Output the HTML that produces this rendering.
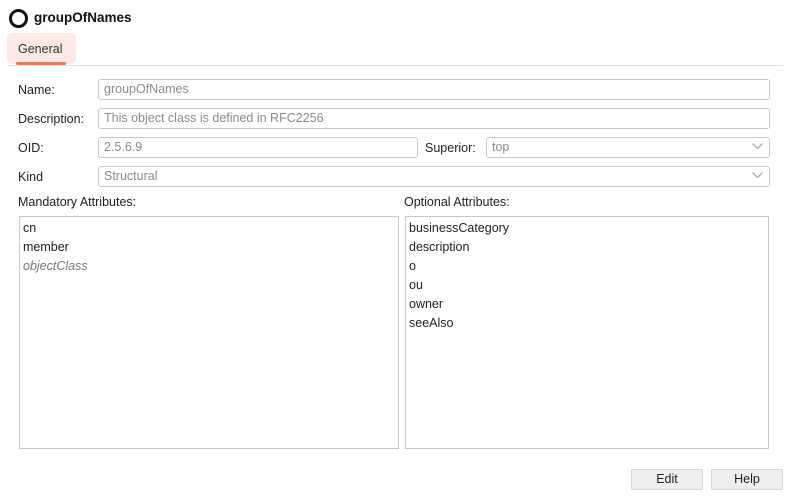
<!DOCTYPE html>
<html><head><style>
body{margin:0;width:789px;height:497px;background:#fff;font-family:"Liberation Sans",sans-serif;font-size:12.5px;color:#222;position:relative;overflow:hidden}
.a{position:absolute}
.in{position:absolute;border:1px solid #c8c8c8;border-radius:3px;height:20px;box-sizing:border-box;color:#8a8a8a;padding-left:5px;line-height:18px;background:#fff}
.lbl{position:absolute;line-height:14px}
.chev{position:absolute;right:6px;top:5px}
.list{position:absolute;border:1px solid #c8c8c8;box-sizing:border-box;background:#fff;padding-top:2px}
.list div{height:19px;line-height:19px;padding-left:3px}
.btn{position:absolute;background:#efefef;border:1px solid #d6d6d6;border-radius:2px;box-sizing:border-box;text-align:center;line-height:19px;height:21px}
</style></head><body>
<div class="a" style="left:9px;top:9px;width:13px;height:13px;border:3px solid #111;border-radius:50%"></div>
<div class="a" style="left:34px;top:10px;font-weight:bold;font-size:13.5px;color:#111">groupOfNames</div>
<div class="a" style="left:7px;top:33px;width:69px;height:31px;background:#fdeae4;border-radius:5px"></div>
<div class="a" style="left:18px;top:42px;color:#333">General</div>
<div class="a" style="left:16px;top:62px;width:50px;height:3px;background:#ec7a52;border-radius:2px"></div>
<div class="a" style="left:8px;top:65px;width:775px;height:1px;background:#e2e2e2"></div>

<div class="lbl" style="left:18px;top:83px">Name:</div>
<div class="in" style="left:98px;top:79px;width:672px;height:21px">groupOfNames</div>
<div class="lbl" style="left:18px;top:112px">Description:</div>
<div class="in" style="left:98px;top:108px;width:672px;height:21px">This object class is defined in RFC2256</div>
<div class="lbl" style="left:18px;top:141px">OID:</div>
<div class="in" style="left:98px;top:137px;width:320px;height:21px">2.5.6.9</div>
<div class="lbl" style="left:425px;top:141px">Superior:</div>
<div class="in" style="left:486px;top:137px;width:284px;height:21px">top<svg class="chev" width="11" height="7"><path d="M0.5 0.5 L5.5 5.5 L10.5 0.5" fill="none" stroke="#999"/></svg></div>
<div class="lbl" style="left:18px;top:170px">Kind</div>
<div class="in" style="left:98px;top:166px;width:672px;height:21px">Structural<svg class="chev" width="11" height="7"><path d="M0.5 0.5 L5.5 5.5 L10.5 0.5" fill="none" stroke="#999"/></svg></div>

<div class="lbl" style="left:18px;top:195px">Mandatory Attributes:</div>
<div class="lbl" style="left:404px;top:195px">Optional Attributes:</div>
<div class="list" style="left:19px;top:216px;width:380px;height:233px">
<div>cn</div><div>member</div><div style="font-style:italic;color:#777">objectClass</div></div>
<div class="list" style="left:405px;top:216px;width:364px;height:233px">
<div>businessCategory</div><div>description</div><div>o</div><div>ou</div><div>owner</div><div>seeAlso</div></div>

<div class="btn" style="left:631px;top:469px;width:72px">Edit</div>
<div class="btn" style="left:711px;top:469px;width:72px">Help</div>
</body></html>
